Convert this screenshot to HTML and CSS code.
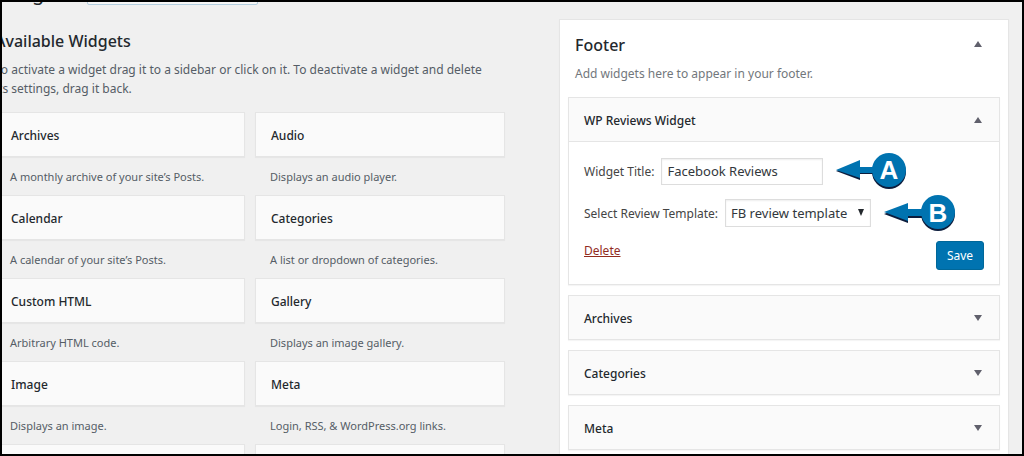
FILE: index.html
```html
<!DOCTYPE html>
<html lang="en">
<head>
<meta charset="utf-8">
<title>Widgets</title>
<link rel="stylesheet" href="styles.css">
</head>
<body>
<div class="frame">
  <header class="page-head">
    <h1>Widgets</h1>
    <button type="button" class="preview-btn">Manage with Live Preview</button>
  </header>
  <main class="columns">
    <section class="available">
      <h2>Available Widgets</h2>
      <p class="intro">To activate a widget drag it to a sidebar or click on it. To deactivate a widget and delete<br>its settings, drag it back.</p>
      <div class="widget-grid">
        <article><h3 class="bar">Archives</h3><p>A monthly archive of your site’s Posts.</p></article>
        <article><h3 class="bar">Audio</h3><p>Displays an audio player.</p></article>
        <article><h3 class="bar">Calendar</h3><p>A calendar of your site’s Posts.</p></article>
        <article><h3 class="bar">Categories</h3><p>A list or dropdown of categories.</p></article>
        <article><h3 class="bar">Custom HTML</h3><p>Arbitrary HTML code.</p></article>
        <article><h3 class="bar">Gallery</h3><p>Displays an image gallery.</p></article>
        <article><h3 class="bar">Image</h3><p>Displays an image.</p></article>
        <article><h3 class="bar">Meta</h3><p>Login, RSS, &amp; WordPress.org links.</p></article>
        <article><h3 class="bar"></h3></article>
        <article><h3 class="bar"></h3></article>
      </div>
    </section>
    <section class="sidebar">
      <div class="sidebar-head">
        <h2>Footer</h2>
        <button type="button" class="toggle" aria-label="Collapse Footer"><svg width="8" height="6" viewBox="0 0 8 6"><path d="M4 0L8 6H0Z"/></svg></button>
      </div>
      <p class="sidebar-desc">Add widgets here to appear in your footer.</p>
      <div class="stack">
        <article class="open">
          <div class="bar"><h3>WP Reviews Widget</h3><button type="button" class="toggle" aria-label="Collapse WP Reviews Widget"><svg width="8" height="6" viewBox="0 0 8 6"><path d="M4 0L8 6H0Z"/></svg></button></div>
          <form class="settings">
            <div class="field">
              <label for="title">Widget Title:</label>
              <input id="title" type="text" value="Facebook Reviews">
              <svg class="callout" width="72" height="38" viewBox="0 0 72 38">
                <g class="shade"><path d="M0 19L24 10V17H38V22H24V28Z"/><circle cx="53" cy="20" r="17"/></g>
                <g class="face"><path d="M0 18L24 8V15H38V21H24V26Z"/><circle cx="53" cy="18" r="17"/></g>
                <text x="53" y="27">A</text>
              </svg>
            </div>
            <div class="field">
              <label for="template">Select Review Template:</label>
              <span class="select-wrap"><select id="template"><option>FB review template</option></select><svg width="6" height="7" viewBox="0 0 6 7"><path d="M0 0H6L3 7Z"/></svg></span>
              <svg class="callout" width="72" height="38" viewBox="0 0 72 38">
                <g class="shade"><path d="M0 20L24 11V18H38V24H24V29Z"/><circle cx="54" cy="20" r="17"/></g>
                <g class="face"><path d="M0 18L24 9V15H38V22H24V27Z"/><circle cx="54" cy="18" r="17"/></g>
                <text x="54" y="28">B</text>
              </svg>
            </div>
            <div class="actions"><a href="#">Delete</a><button type="button" class="save">Save</button></div>
          </form>
        </article>
        <div class="bar"><h3>Archives</h3><button type="button" class="toggle" aria-label="Expand Archives"><svg width="8" height="6" viewBox="0 0 8 6"><path d="M0 0H8L4 6Z"/></svg></button></div>
        <div class="bar"><h3>Categories</h3><button type="button" class="toggle" aria-label="Expand Categories"><svg width="8" height="6" viewBox="0 0 8 6"><path d="M0 0H8L4 6Z"/></svg></button></div>
        <div class="bar"><h3>Meta</h3><button type="button" class="toggle" aria-label="Expand Meta"><svg width="8" height="6" viewBox="0 0 8 6"><path d="M0 0H8L4 6Z"/></svg></button></div>
      </div>
    </section>
  </main>
</div>
</body>
</html>
```
FILE: styles.css
```css
* { box-sizing: border-box; }
body {
  margin: 0;
  font: 12px/19px "Noto Sans", "Open Sans", sans-serif;
  color: #555d66;
  background: #f0f0f0;
}
h1, h2, h3, p { margin: 0; }
h2, h3 { color: #23282d; font-weight: 500; }
h2 { font-size: 16px; line-height: 24px; }
h3 { font-size: 12px; line-height: 19px; }
button, input, select { font-family: inherit; }

.frame {
  height: 100vh;
  border: 2px solid #000;
  overflow: hidden;
}
.page-head {
  display: flex;
  align-items: flex-end;
  gap: 7px;
  margin: -26px 0 0 -7px;
  height: 29px;
}
h1 {
  width: 85px;
  padding-left: 1px;
  font-size: 20px;
  font-weight: 400;
  line-height: 25px;
  color: #23282d;
}
.preview-btn {
  width: 171px;
  height: 28px;
  padding: 0;
  font-size: 12px;
  color: #0073aa;
  background: #f7f7f7;
  border: 1px solid #b4cfe0;
  border-radius: 2px;
}
.columns {
  display: grid;
  grid-template-columns: 510fr 450fr;
  gap: 54px;
  margin: 0 13px 0 -7px;
}
.available { padding-top: 24px; }
.intro { margin-top: 7px; white-space: nowrap; }
.widget-grid {
  display: grid;
  grid-template-columns: 1fr 1fr;
  gap: 0 10px;
  margin-top: 14px;
}
.widget-grid p { padding: 10px 15px 9px; font-size: 11px; }
.bar {
  display: flex;
  align-items: center;
  justify-content: space-between;
  height: 45px;
  padding: 2px 15px 0;
  border: 1px solid #e5e5e5;
  background: #fafafa;
  box-shadow: 0 1px 1px rgba(0, 0, 0, .04);
}
.toggle {
  display: flex;
  align-items: center;
  justify-content: center;
  width: 20px;
  height: 20px;
  margin-right: -4px;
  padding: 0 0 2px;
  border: 0;
  background: none;
  fill: #60606c;
}
.sidebar {
  margin-top: 14px;
  padding: 0 8px 14px;
  background: #fff;
  border: 1px solid #e5e5e5;
  box-shadow: 0 1px 1px rgba(0, 0, 0, .04);
}
.sidebar-head {
  display: flex;
  align-items: center;
  justify-content: space-between;
  padding: 13px 16px 0 7px;
}
.sidebar-desc { padding: 7px 7px 0; color: #72777c; }
.stack {
  display: flex;
  flex-direction: column;
  gap: 10px;
  margin-top: 14px;
}
.open {
  border: 1px solid #e5e5e5;
  box-shadow: 0 1px 1px rgba(0, 0, 0, .04);
}
.open .bar {
  height: 44px;
  border-width: 0 0 1px;
  box-shadow: none;
}
.settings { padding: 10px 15px 14px; color: #444; }
.field {
  display: flex;
  align-items: center;
  height: 38px;
  margin-bottom: 4px;
}
.field label { margin-right: 7px; }
.field input, .field select {
  font-size: 13px;
  color: #32373c;
  background: #fff;
  border: 1px solid #ddd;
  border-radius: 0;
  box-shadow: inset 0 1px 2px rgba(0, 0, 0, .07);
}
.field input { width: 162px; height: 27px; padding: 0 5px; }
.field select {
  appearance: none;
  width: 146px;
  height: 28px;
  padding: 0 5px;
}
.select-wrap { position: relative; display: flex; }
.select-wrap svg { position: absolute; right: 7px; top: 10px; fill: #23282d; }
.callout { margin-left: 13px; }
.shade { fill: #0c1c3c; }
.face { fill: #0073b0; }
.callout text {
  font: bold 26px "Liberation Sans", sans-serif;
  text-anchor: middle;
  fill: #fff;
}
.actions {
  display: flex;
  justify-content: space-between;
  align-items: flex-start;
  margin-top: 9px;
}
.actions a { color: #922c1f; }
.save {
  width: 48px;
  height: 29px;
  padding: 0;
  font-size: 12px;
  color: #fff;
  background: #0073b0;
  border: 1px solid #006799;
  border-radius: 3px;
}
```
